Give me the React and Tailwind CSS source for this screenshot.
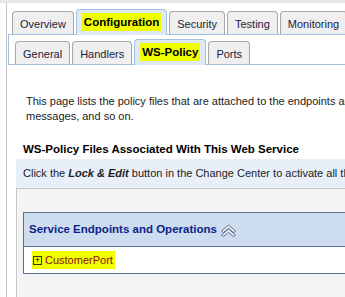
const mainTabs = ["Overview", "Configuration", "Security", "Testing", "Monitoring"];
const subTabs = ["General", "Handlers", "WS-Policy", "Ports"];

function Tab({ label, active }) {
  if (active) {
    return (
      <div className="relative z-10 -mb-px flex h-[26px] items-start rounded-t-[4px] border border-b-0 border-[#a3c0e0] bg-[#dfe9f5] px-[5px] pt-[3px]">
        <span className="bg-[#f0ff00] px-[2px] py-[2px] text-[11.5px] font-bold leading-[14px] text-black">{label}</span>
      </div>
    );
  }
  return (
    <div className="flex h-[23px] items-start rounded-t-[4px] border border-b-0 border-[#a8a8a8] bg-[#efefef] px-[7px] pt-[5px] text-[11px] leading-[14px] text-[#1c1c3c]">
      {label}
    </div>
  );
}

// hollow double chevron used for the sort toggle
function SortUp() {
  return (
    <svg width="17" height="13" viewBox="0 0 17 13" className="mt-[1px]">
      <path d="M1.5 7 L8.5 1 L15.5 7 L13.5 8.5 L8.5 4.3 L3.5 8.5 Z" fill="#eef2f8" stroke="#5c6c88" strokeWidth="1" strokeLinejoin="round" />
      <path d="M1.5 11 L8.5 5 L15.5 11 L13.5 12.5 L8.5 8.3 L3.5 12.5 Z" fill="#eef2f8" stroke="#5c6c88" strokeWidth="1" strokeLinejoin="round" />
    </svg>
  );
}

export default function App() {
  return (
    <div className="relative h-[297px] w-[345px] overflow-hidden bg-white font-['Liberation_Sans',Arial,sans-serif] text-[#222]">
      <div className="h-[3px] bg-[#e6e6e6]" />
      <div className="flex h-[294px]">
        <div className="w-[6px]" />
        <div className="w-px bg-[#c4c4c4]" />
        <div className="flex min-w-0 flex-1 flex-col">
          {/* main tabs */}
          <div className="flex items-end gap-[2px] pl-[5px] pt-[6px] whitespace-nowrap">
            {mainTabs.map((t) => (
              <Tab key={t} label={t} active={t === "Configuration"} />
            ))}
          </div>

          {/* sub tabs frame */}
          <div className="ml-px flex h-[31px] items-end gap-[2px] border-b border-l border-t border-[#a3c0e0] pl-[6px] whitespace-nowrap">
            {subTabs.map((t) => (
              <Tab key={t} label={t} active={t === "WS-Policy"} />
            ))}
          </div>

          <p className="ml-[19px] mt-[29px] whitespace-nowrap text-[11px] leading-[15px] text-[#222]">
            This page lists the policy files that are attached to the endpoints and operations of this Web service, such as security, reliable
            <br />
            messages, and so on.
          </p>

          <h2 className="ml-[16px] mt-[17px] whitespace-nowrap text-[11.5px] font-bold leading-[16px] text-black">
            WS-Policy Files Associated With This Web Service
          </h2>

          <div className="ml-[9px] mt-[2px] flex h-[30px] items-center border-b border-[#c8c8c8] bg-[#e9eff9] pl-[7px] whitespace-nowrap text-[11px]">
            Click the&nbsp;<b className="italic text-[#222]">Lock &amp; Edit</b>&nbsp;button in the Change Center to activate all the buttons on this page.
          </div>

          <div className="ml-[9px] flex-1 border-l border-[#c8c8c8] bg-[#f4f4f4] pl-[6px] pt-[23px]">
            <div className="w-[400px] border border-[#5b7090]">
              <div className="flex h-[34px] items-center gap-[3px] border-b border-[#5b7090] bg-[#cddcee] pl-[5px]">
                <span className="text-[11.5px] font-bold text-[#0d1f8a]">Service Endpoints and Operations</span>
                <SortUp />
              </div>
              <div className="flex h-[26px] items-center bg-white pl-[8px]">
                <span className="flex items-center gap-[3px] bg-[#f0ff00] py-[2px] pl-[1px] pr-[2px]">
                  <span className="flex h-[9px] w-[9px] items-center justify-center border border-[#333] bg-[#f0ff00] text-[9px] leading-none text-black">
                    +
                  </span>
                  <span className="text-[11px] leading-[14px] text-[#8a1010]">CustomerPort</span>
                </span>
              </div>
            </div>
          </div>
        </div>
      </div>
    </div>
  );
}
